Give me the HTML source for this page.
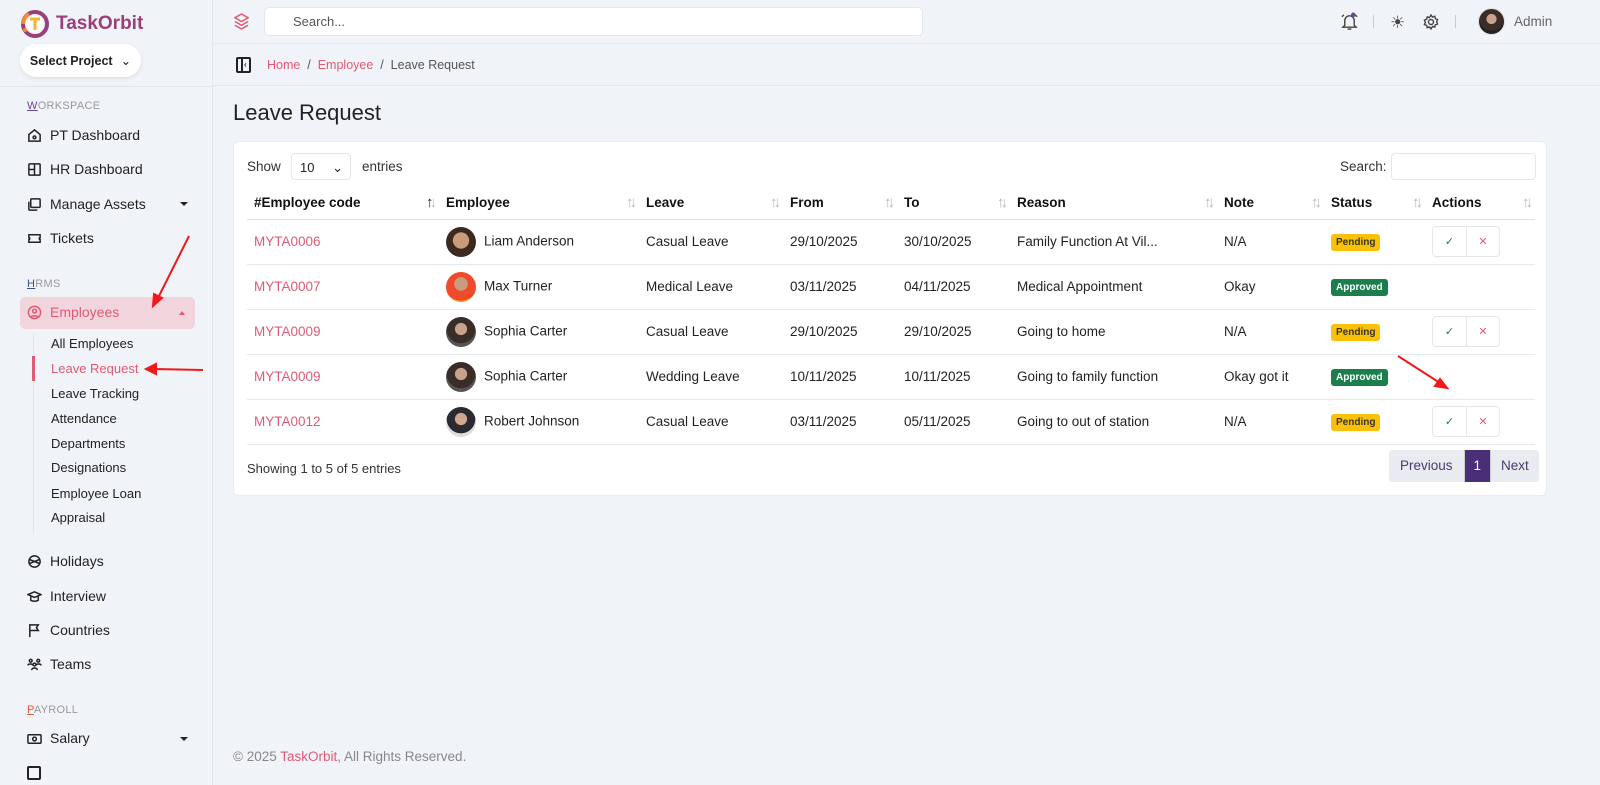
<!DOCTYPE html>
<html><head><meta charset="utf-8"><style>
*{box-sizing:border-box;margin:0;padding:0}
body{width:1600px;height:785px;overflow:hidden;background:#f0f3f7;font-family:"Liberation Sans",sans-serif;color:#222;position:relative;font-size:14px}
.abs{position:absolute}
.side{left:0;top:0;width:213px;height:785px;border-right:1px solid #e3e6eb;background:#f0f3f7}
.logo{left:20px;top:9px;display:flex;align-items:center;gap:6px;font-weight:bold;font-size:19px;color:#9b3f7a}
.selp{left:20px;top:44px;width:121px;height:33px;background:#fff;border-radius:17px;box-shadow:0 2px 5px rgba(0,0,0,.08);font-size:12.5px;font-weight:bold;color:#222;display:flex;align-items:center;justify-content:center;gap:8px}
.sec{left:27px;font-size:11px;color:#999;letter-spacing:.3px}
.sec b{font-weight:normal;text-decoration:underline}
.item{left:27px;display:flex;align-items:center;gap:8px;font-size:14px;color:#222}
.item svg{width:15px;height:15px;stroke:#222;fill:none;stroke-width:1.6}
.caret{left:180px;width:0;height:0;border-left:4px solid transparent;border-right:4px solid transparent;border-top:4px solid #222}
.sub{left:51px;font-size:13px;color:#222}
.top{left:213px;top:0;right:0;height:44px;border-bottom:1px solid #e3e6eb}
.bc{left:213px;top:44px;right:0;height:42px;border-bottom:1px solid #e3e6eb}
.card{left:233px;top:141px;width:1314px;height:355px;background:#fff;border-radius:6px;border:1px solid #e8ebef}
table{position:absolute;left:13px;top:45px;width:1288px;border-collapse:collapse}
th{text-align:left;font-size:13.5px;height:32px;border-bottom:1px solid #dde1e6;padding-left:7px;position:relative;color:#111}
th i{position:absolute;right:6px;top:7px;font-style:normal;color:#b5b5b5;font-size:15px;font-weight:bold;letter-spacing:-4px}
td{height:45px;border-bottom:1px solid #e5e8ec;padding-left:7px;font-size:13.5px;color:#222}
.code{color:#e05a74}
.av{display:inline-block;width:30px;height:30px;border-radius:50%;vertical-align:middle;margin-right:8px}
.bd{display:inline-block;font-size:10px;font-weight:bold;padding:3px 5px;border-radius:3px}
.pen{background:#fbc108;color:#333}.app{background:#1c7e4d;color:#fff}
.act{display:inline-flex;border:1px solid #e3e6ea;border-radius:4px;height:31px}
.act span{width:33px;display:flex;align-items:center;justify-content:center;font-size:11px}
.act span+span{border-left:1px solid #e3e6ea}
</style></head><body>
<div class="abs side"></div>
<div class="abs logo"><svg width="30" height="30" viewBox="0 0 30 30"><circle cx="15" cy="15" r="12" fill="none" stroke="#9b3f7a" stroke-width="4"/><path d="M3 15a12 12 0 0 1 6-10" stroke="#f08a3c" stroke-width="4" fill="none"/><circle cx="15" cy="15" r="8" fill="#fff"/><path d="M10 10h10M15 10v11" stroke="#f5b52e" stroke-width="3"/><circle cx="5" cy="21" r="2" fill="#f08a3c"/></svg>TaskOrbit</div>
<div class="abs selp">Select Project <span style="font-weight:normal">⌄</span></div>
<div class="abs" style="left:0;top:86px;width:212px;border-top:1px solid #e3e6eb"></div>
<div class="abs sec" style="top:100px"><b style="color:#6b3fa0">W</b>ORKSPACE</div>
<div class="abs item" style="top:127px"><svg viewBox="0 0 16 16"><path d="M2 7l6-5 6 5v7H2z"/><circle cx="8" cy="10" r="1.5"/></svg>PT Dashboard</div>
<div class="abs item" style="top:161px"><svg viewBox="0 0 16 16"><rect x="2" y="2" width="12" height="12" rx="1"/><path d="M8 2v12M2 8h6"/></svg>HR Dashboard</div>
<div class="abs item" style="top:196px"><svg viewBox="0 0 16 16"><rect x="4" y="2" width="10" height="9" rx="1"/><path d="M2 5v8a1 1 0 0 0 1 1h8"/></svg>Manage Assets</div>
<div class="abs caret" style="top:202px"></div>
<div class="abs item" style="top:230px"><svg viewBox="0 0 16 16"><path d="M2 4h12v3a1 1 0 0 0 0 2v3H2V9a1 1 0 0 0 0-2z"/></svg>Tickets</div>
<div class="abs sec" style="top:278px"><b style="color:#3a4fa0">H</b>RMS</div>
<div class="abs" style="left:20px;top:297px;width:175px;height:32px;background:#f2d5dc;border-radius:5px"></div>
<div class="abs item" style="top:304px;color:#e05a74"><svg viewBox="0 0 16 16" style="stroke:#e05a74"><circle cx="8" cy="8" r="6.5"/><circle cx="8" cy="6.5" r="2"/><path d="M4 13c1-2 7-2 8 0"/></svg>Employees</div>
<div class="abs" style="left:179px;top:311px;border-left:3px solid transparent;border-right:3px solid transparent;border-bottom:4px solid #e05a74"></div>
<div class="abs" style="left:33px;top:333px;width:1px;height:200px;background:#e3e6eb"></div>
<div class="abs" style="left:32px;top:356px;width:3px;height:25px;background:#e05a74"></div>
<div class="abs sub" style="top:336px">All Employees</div>
<div class="abs sub" style="top:361px;color:#e05a74">Leave Request</div>
<div class="abs sub" style="top:386px">Leave Tracking</div>
<div class="abs sub" style="top:411px">Attendance</div>
<div class="abs sub" style="top:436px">Departments</div>
<div class="abs sub" style="top:460px">Designations</div>
<div class="abs sub" style="top:486px">Employee Loan</div>
<div class="abs sub" style="top:510px">Appraisal</div>
<div class="abs item" style="top:553px"><svg viewBox="0 0 16 16"><circle cx="8" cy="8" r="6"/><path d="M3 6l10 4M3 10l10-4"/></svg>Holidays</div>
<div class="abs item" style="top:588px"><svg viewBox="0 0 16 16"><path d="M1 6l7-3 7 3-7 3z"/><path d="M4 8v4c2 1.5 6 1.5 8 0V8"/></svg>Interview</div>
<div class="abs item" style="top:622px"><svg viewBox="0 0 16 16"><path d="M3 15V2h9l-2 3 2 3H3"/></svg>Countries</div>
<div class="abs item" style="top:656px"><svg viewBox="0 0 16 16"><circle cx="4" cy="4" r="1.5"/><circle cx="12" cy="4" r="1.5"/><circle cx="8" cy="8" r="1.5"/><path d="M5 14c0-3 6-3 6 0M1 9c0-2 5-2 5 0M10 9c0-2 5-2 5 0"/></svg>Teams</div>
<div class="abs sec" style="top:704px"><b style="color:#e05a3c">P</b>AYROLL</div>
<div class="abs item" style="top:730px"><svg viewBox="0 0 16 16"><rect x="1" y="4" width="14" height="9" rx="1"/><circle cx="8" cy="8.5" r="2"/></svg>Salary</div>
<div class="abs caret" style="top:737px"></div>
<div class="abs" style="left:27px;top:766px;width:14px;height:14px;border:2px solid #222;border-radius:2px"></div>

<div class="abs top"></div>
<svg class="abs" style="left:234px;top:13px" width="15" height="17" viewBox="0 0 16 18" fill="none" stroke="#e05a74" stroke-width="1.6"><path d="M8 1l7 4-7 4-7-4z"/><path d="M1 9l7 4 7-4M1 13l7 4 7-4"/></svg>
<div class="abs" style="left:264px;top:7px;width:659px;height:29px;background:#fff;border:1px solid #e3e6eb;border-radius:5px;padding:6px 0 0 28px;font-size:13px;color:#555">Search...</div>
<svg class="abs" style="left:1341px;top:12px" width="17" height="19" viewBox="0 0 18 20" fill="none" stroke="#444" stroke-width="1.5"><path d="M4 14V9a5 5 0 0 1 10 0v5l2 2H2z"/><path d="M7 18h4M1 5l2-2M17 5l-2-2"/><circle cx="13" cy="3" r="2.5" fill="#6b4a9e" stroke="none"/></svg>
<div class="abs" style="left:1373px;top:15px;width:1px;height:13px;background:#ccc"></div>
<div class="abs" style="left:1390px;top:13px;font-size:17px;color:#444">☀</div>
<svg class="abs" style="left:1423px;top:14px" width="16" height="16" viewBox="0 0 16 16" fill="none" stroke="#444" stroke-width="1.4"><circle cx="8" cy="8" r="2.5"/><path d="M8 1l1.5 2 2.3-.7.5 2.3 2.3.9-1 2.2 1 2.3-2.3.8-.5 2.3-2.3-.7L8 15l-1.5-2-2.3.7-.5-2.3-2.3-.8 1-2.3-1-2.2 2.3-.9.5-2.3 2.3.7z"/></svg>
<div class="abs" style="left:1455px;top:15px;width:1px;height:13px;background:#ccc"></div>
<div class="abs" style="left:1478px;top:8px;width:27px;height:27px;border-radius:50%;background:radial-gradient(circle at 50% 40%,#c9a28c 0 25%,#3a2d28 27% 60%,#222 62%);border:1px solid #ddd"></div>
<div class="abs" style="left:1514px;top:14px;font-size:13.5px;color:#666">Admin</div>

<div class="abs bc"></div>
<div class="abs" style="left:236px;top:57px;width:15px;height:16px;border:2px solid #222;border-radius:2px"><div style="position:absolute;left:3px;top:0;width:2px;height:12px;background:#222"></div><div style="position:absolute;left:6px;top:1px;font-size:8px;font-weight:bold">‹</div></div>
<div class="abs" style="left:267px;top:58px;font-size:12.5px;color:#555"><span style="color:#e05a74">Home</span> &nbsp;/&nbsp; <span style="color:#e05a74">Employee</span> &nbsp;/&nbsp; Leave Request</div>
<div class="abs" style="left:233px;top:100px;font-size:22px;color:#222">Leave Request</div>

<div class="abs card">
<div class="abs" style="left:13px;top:17px;font-size:13.5px;color:#333">Show</div>
<div class="abs" style="left:57px;top:11px;width:60px;height:27px;border:1px solid #e3e6eb;border-radius:4px;font-size:13px;padding:6px 0 0 8px">10 <span style="margin-left:14px">⌄</span></div>
<div class="abs" style="left:128px;top:17px;font-size:13.5px;color:#333">entries</div>
<div class="abs" style="left:1106px;top:17px;font-size:13.5px;color:#333">Search:</div>
<div class="abs" style="left:1157px;top:11px;width:145px;height:27px;border:1px solid #e3e6eb;border-radius:4px"></div>
<table>
<tr><th style="width:192px">#Employee code<i style="color:#222">↑<span style="color:#bbb">↓</span></i></th><th style="width:200px">Employee<i>↑↓</i></th><th style="width:144px">Leave<i>↑↓</i></th><th style="width:114px">From<i>↑↓</i></th><th style="width:113px">To<i>↑↓</i></th><th style="width:207px">Reason<i>↑↓</i></th><th style="width:107px">Note<i>↑↓</i></th><th style="width:101px">Status<i>↑↓</i></th><th>Actions<i>↑↓</i></th></tr>
<tr><td class="code">MYTA0006</td><td><span class="av" style="background:radial-gradient(circle at 50% 45%,#c99c7c 0 35%,#3b2a20 38%)"></span>Liam Anderson</td><td>Casual Leave</td><td>29/10/2025</td><td>30/10/2025</td><td>Family Function At Vil...</td><td>N/A</td><td><span class="bd pen">Pending</span></td><td><span class="act"><span style="color:#1c7e4d">✓</span><span style="color:#e05a74">✕</span></span></td></tr>
<tr><td class="code">MYTA0007</td><td><span class="av" style="background:radial-gradient(circle at 50% 40%,#c99c7c 0 28%,#f04a2c 30% 70%,#e8a020 72%)"></span>Max Turner</td><td>Medical Leave</td><td>03/11/2025</td><td>04/11/2025</td><td>Medical Appointment</td><td>Okay</td><td><span class="bd app">Approved</span></td><td></td></tr>
<tr><td class="code">MYTA0009</td><td><span class="av" style="background:radial-gradient(circle at 50% 40%,#c9a28c 0 25%,#3a2d28 27% 60%,#555 62%)"></span>Sophia Carter</td><td>Casual Leave</td><td>29/10/2025</td><td>29/10/2025</td><td>Going to home</td><td>N/A</td><td><span class="bd pen">Pending</span></td><td><span class="act"><span style="color:#1c7e4d">✓</span><span style="color:#e05a74">✕</span></span></td></tr>
<tr><td class="code">MYTA0009</td><td><span class="av" style="background:radial-gradient(circle at 50% 40%,#c9a28c 0 25%,#3a2d28 27% 60%,#555 62%)"></span>Sophia Carter</td><td>Wedding Leave</td><td>10/11/2025</td><td>10/11/2025</td><td>Going to family function</td><td>Okay got it</td><td><span class="bd app">Approved</span></td><td></td></tr>
<tr><td class="code">MYTA0012</td><td><span class="av" style="background:radial-gradient(circle at 50% 40%,#d0a890 0 25%,#2a2a30 27% 60%,#ddd 62%)"></span>Robert Johnson</td><td>Casual Leave</td><td>03/11/2025</td><td>05/11/2025</td><td>Going to out of station</td><td>N/A</td><td><span class="bd pen">Pending</span></td><td><span class="act"><span style="color:#1c7e4d">✓</span><span style="color:#e05a74">✕</span></span></td></tr>
</table>
<div class="abs" style="left:13px;top:319px;font-size:13px;color:#333">Showing 1 to 5 of 5 entries</div>
<div class="abs" style="left:1155px;top:308px;height:32px;display:flex;font-size:13.5px;border-radius:4px;overflow:hidden">
<span style="background:#e8ebef;color:#4a3a70;padding:8px 11px">Previous</span><span style="background:#4a2f78;color:#fff;padding:8px 9px;border-left:1px solid #ccc;border-right:1px solid #ccc">1</span><span style="background:#e8ebef;color:#4a3a70;padding:8px 10px">Next</span></div>
</div>

<div class="abs" style="left:233px;top:749px;font-size:13.5px;color:#888">© 2025 <span style="color:#e05a74">TaskOrbit</span>, All Rights Reserved.</div>

<svg class="abs" style="left:0;top:0" width="1600" height="785"><g stroke="#f01818" stroke-width="2" fill="#f01818"><line x1="189" y1="236" x2="157" y2="300"/><path d="M153 306l1-12 8 4z"/><line x1="203" y1="370" x2="154" y2="369"/><path d="M146 369l10-5v10z"/><line x1="1398" y1="356" x2="1440" y2="383"/><path d="M1447 388l-12-2 5-7z"/></g></svg>
</body></html>
